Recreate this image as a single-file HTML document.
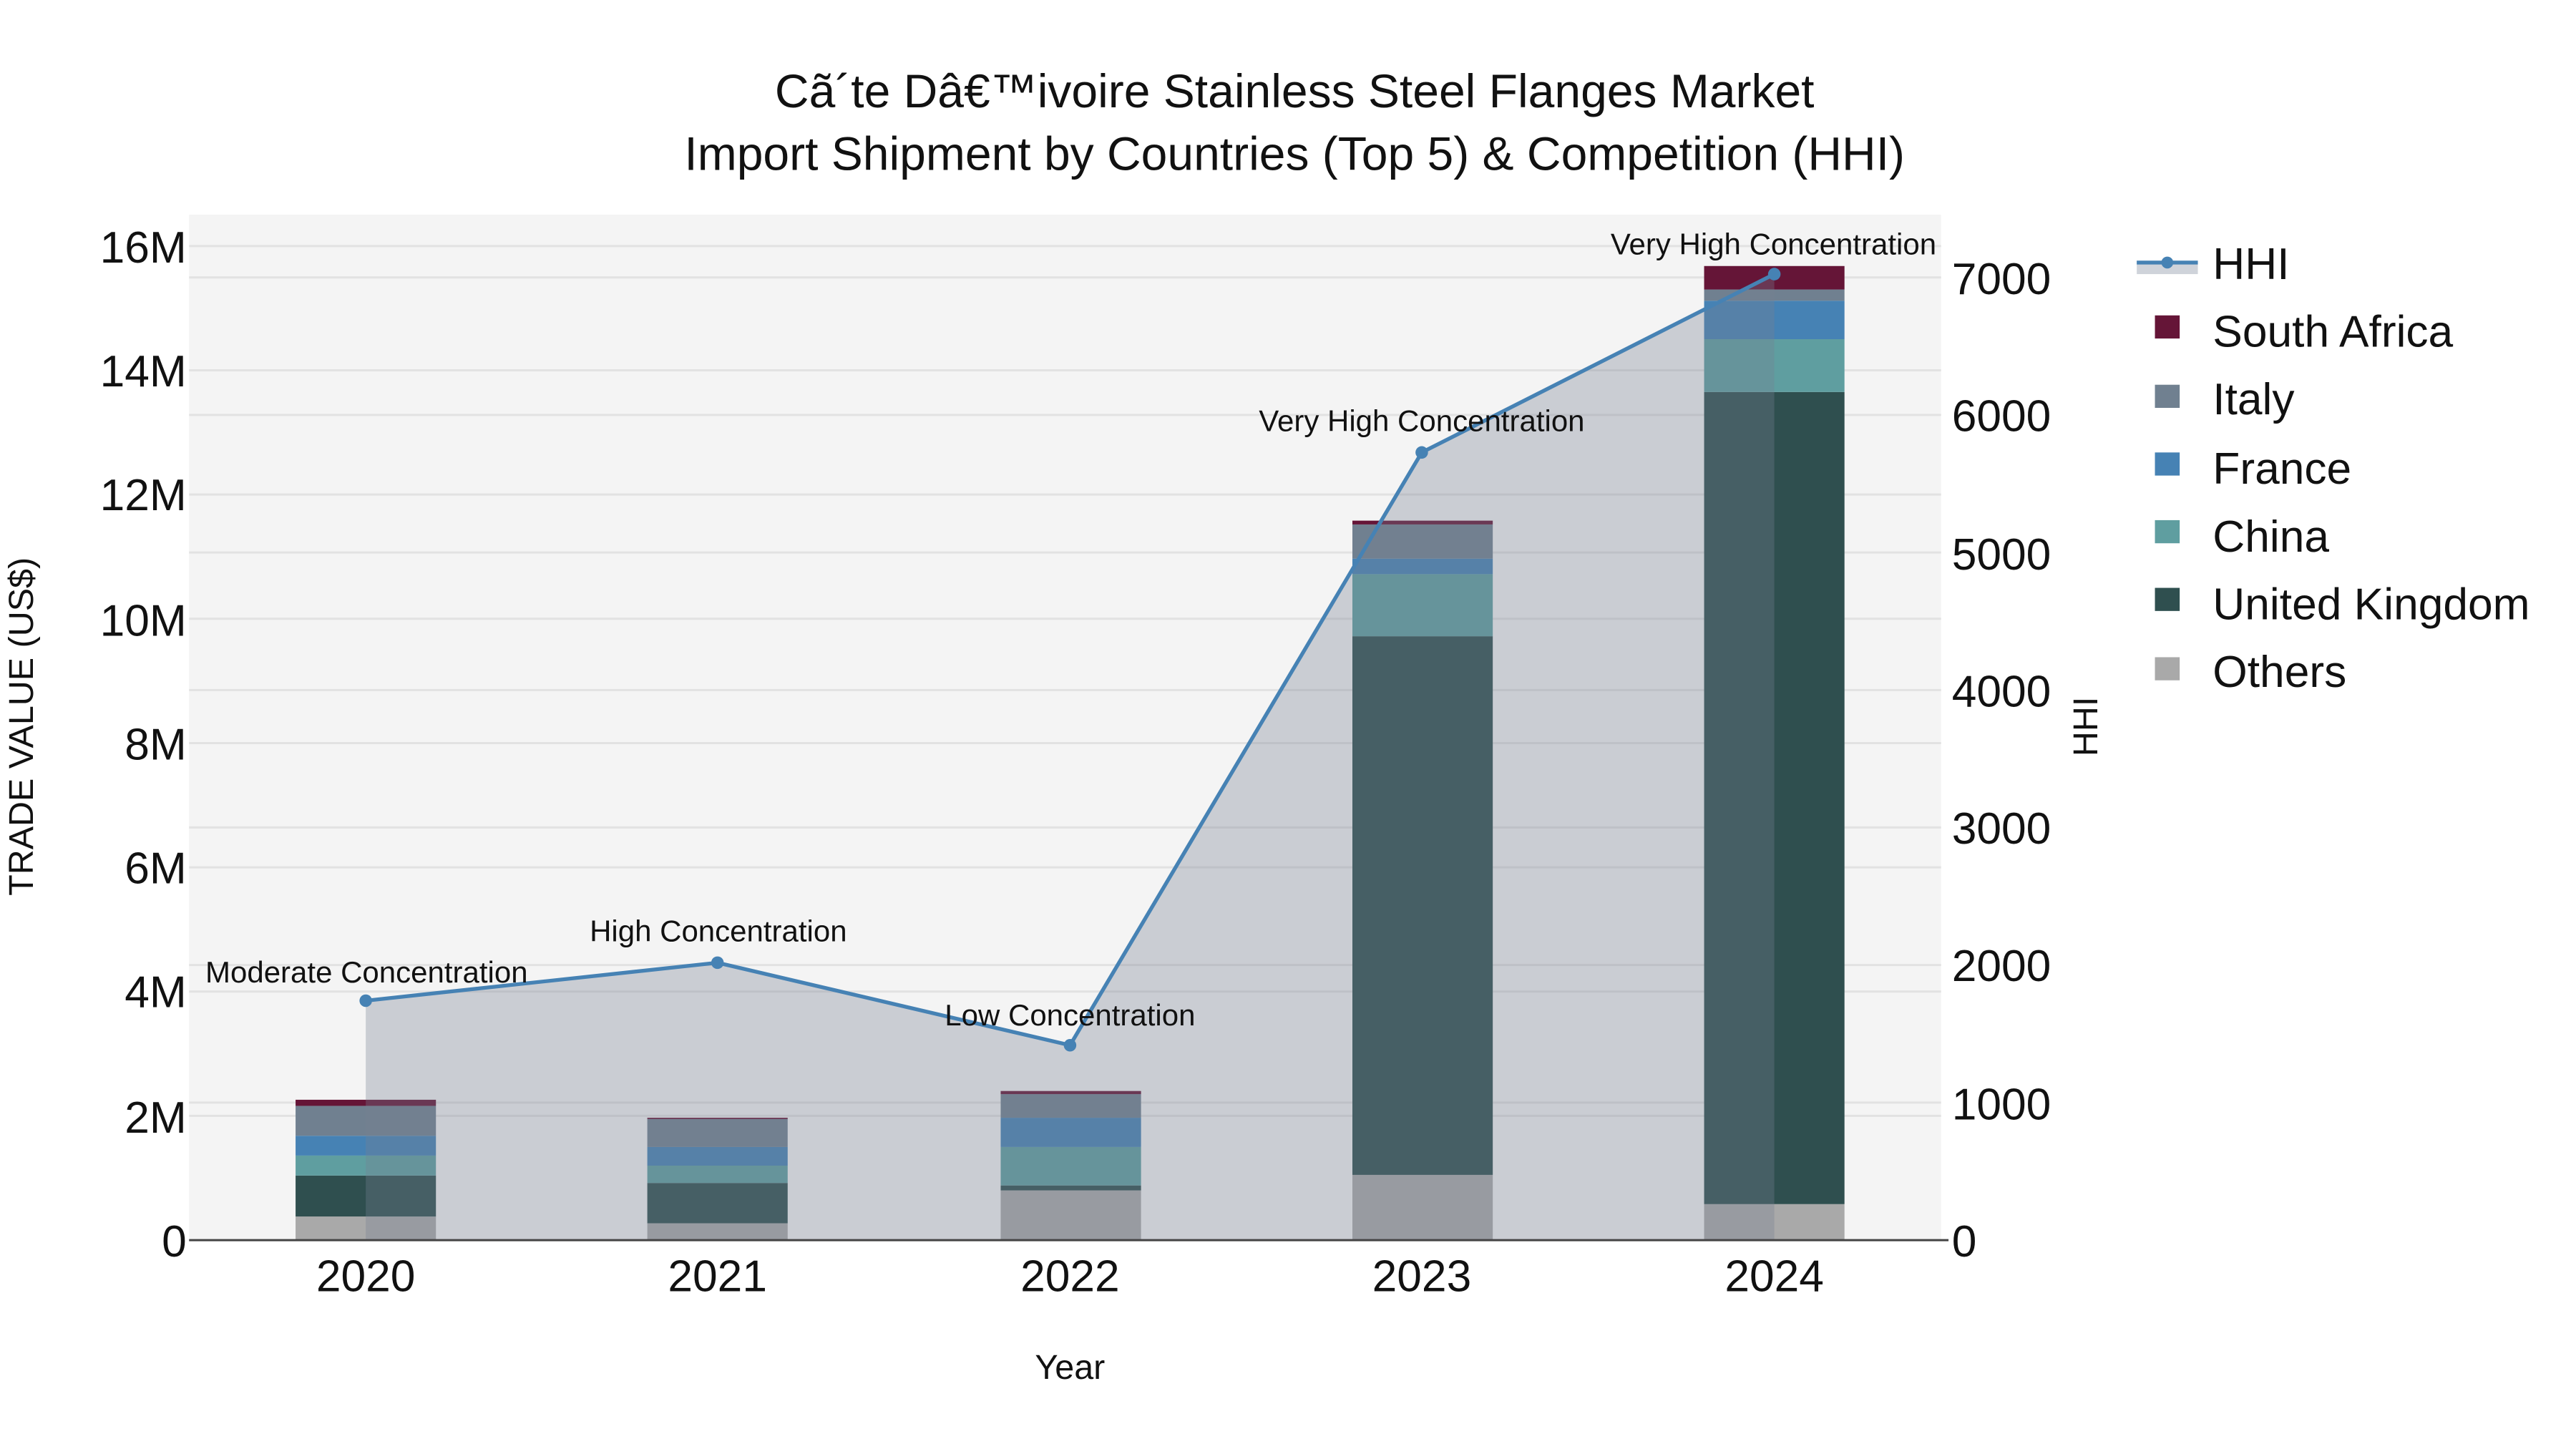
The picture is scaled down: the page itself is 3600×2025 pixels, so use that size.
<!DOCTYPE html>
<html><head><meta charset="utf-8"><style>
html,body{margin:0;padding:0;background:#fff;}
svg{display:block;}
text{font-family:"Liberation Sans",sans-serif;fill:#111;}
</style></head><body>
<svg width="3600" height="2025" viewBox="0 0 1560 877.5" xmlns="http://www.w3.org/2000/svg">
<rect x="0" y="0" width="1560" height="877.5" fill="#fff"/>
<rect x="114.5" y="130" width="1061" height="621" fill="#f4f4f4"/>
<g stroke="#e2e2e2" stroke-width="1.3">
<line x1="114.5" x2="1175.5" y1="675.75" y2="675.75"/>
<line x1="114.5" x2="1175.5" y1="600.5" y2="600.5"/>
<line x1="114.5" x2="1175.5" y1="525.25" y2="525.25"/>
<line x1="114.5" x2="1175.5" y1="450" y2="450"/>
<line x1="114.5" x2="1175.5" y1="374.75" y2="374.75"/>
<line x1="114.5" x2="1175.5" y1="299.5" y2="299.5"/>
<line x1="114.5" x2="1175.5" y1="224.25" y2="224.25"/>
<line x1="114.5" x2="1175.5" y1="149" y2="149"/>
<line x1="114.5" x2="1175.5" y1="667.7" y2="667.7"/>
<line x1="114.5" x2="1175.5" y1="584.4" y2="584.4"/>
<line x1="114.5" x2="1175.5" y1="501.1" y2="501.1"/>
<line x1="114.5" x2="1175.5" y1="417.9" y2="417.9"/>
<line x1="114.5" x2="1175.5" y1="334.6" y2="334.6"/>
<line x1="114.5" x2="1175.5" y1="251.3" y2="251.3"/>
<line x1="114.5" x2="1175.5" y1="168" y2="168"/>
</g>
<g>
<rect x="179" y="736.7" width="85" height="14.3" fill="#a9a9a9"/>
<rect x="179" y="711.9" width="85" height="24.8" fill="#2f4f4f"/>
<rect x="179" y="699.8" width="85" height="12.1" fill="#5f9ea0"/>
<rect x="179" y="687.8" width="85" height="12" fill="#4682b4"/>
<rect x="179" y="669.7" width="85" height="18.1" fill="#708090"/>
<rect x="179" y="666" width="85" height="3.7" fill="#651537"/>

<rect x="392" y="740.8" width="85" height="10.2" fill="#a9a9a9"/>
<rect x="392" y="716.4" width="85" height="24.4" fill="#2f4f4f"/>
<rect x="392" y="705.9" width="85" height="10.5" fill="#5f9ea0"/>
<rect x="392" y="694.6" width="85" height="11.3" fill="#4682b4"/>
<rect x="392" y="677.6" width="85" height="17" fill="#708090"/>
<rect x="392" y="676.9" width="85" height="0.8" fill="#651537"/>

<rect x="606" y="720.9" width="85" height="30.1" fill="#a9a9a9"/>
<rect x="606" y="717.9" width="85" height="3" fill="#2f4f4f"/>
<rect x="606" y="694.6" width="85" height="23.3" fill="#5f9ea0"/>
<rect x="606" y="676.9" width="85" height="17.7" fill="#4682b4"/>
<rect x="606" y="662.6" width="85" height="14.3" fill="#708090"/>
<rect x="606" y="660.7" width="85" height="1.9" fill="#651537"/>

<rect x="819" y="711.5" width="85" height="39.5" fill="#a9a9a9"/>
<rect x="819" y="385.3" width="85" height="326.2" fill="#2f4f4f"/>
<rect x="819" y="347.7" width="85" height="37.6" fill="#5f9ea0"/>
<rect x="819" y="338.3" width="85" height="9.4" fill="#4682b4"/>
<rect x="819" y="317.6" width="85" height="20.7" fill="#708090"/>
<rect x="819" y="315.3" width="85" height="2.3" fill="#651537"/>

<rect x="1032" y="729.2" width="85" height="21.8" fill="#a9a9a9"/>
<rect x="1032" y="237.4" width="85" height="491.8" fill="#2f4f4f"/>
<rect x="1032" y="205.4" width="85" height="32" fill="#5f9ea0"/>
<rect x="1032" y="182.1" width="85" height="23.3" fill="#4682b4"/>
<rect x="1032" y="175.3" width="85" height="6.8" fill="#708090"/>
<rect x="1032" y="161.1" width="85" height="14.2" fill="#651537"/>
</g>
<polygon points="221.5,751 221.5,606 434.5,583 648,633 861,274 1074.5,166 1074.5,751" fill="rgb(118,127,145)" fill-opacity="0.33"/>
<polyline points="221.5,606 434.5,583 648,633 861,274 1074.5,166" fill="none" stroke="#4682b4" stroke-width="2.3"/>
<g fill="#4682b4">
<circle cx="221.5" cy="606" r="3.8"/><circle cx="434.5" cy="583" r="3.8"/><circle cx="648" cy="633" r="3.8"/><circle cx="861" cy="274" r="3.8"/><circle cx="1074.5" cy="166" r="3.8"/>
</g>
<line x1="114.5" x2="1180" y1="751" y2="751" stroke="#444" stroke-width="1.3"/>
<g font-size="18.2" text-anchor="middle">
<text x="222" y="595">Moderate Concentration</text>
<text x="435" y="570">High Concentration</text>
<text x="648" y="621">Low Concentration</text>
<text x="861" y="261">Very High Concentration</text>
<text x="1074" y="154">Very High Concentration</text>
</g>
<g font-size="28.6" text-anchor="middle">
<text x="784" y="65">Cã´te Dâ€™ivoire Stainless Steel Flanges Market</text>
<text x="784" y="103">Import Shipment by Countries (Top 5) &amp; Competition (HHI)</text>
</g>
<g font-size="27" text-anchor="end">
<text x="113" y="761">0</text>
<text x="113" y="686">2M</text>
<text x="113" y="610">4M</text>
<text x="113" y="535">6M</text>
<text x="113" y="460">8M</text>
<text x="113" y="385">10M</text>
<text x="113" y="309">12M</text>
<text x="113" y="234">14M</text>
<text x="113" y="159">16M</text>
</g>
<g font-size="27" text-anchor="start">
<text x="1182" y="761">0</text>
<text x="1182" y="678">1000</text>
<text x="1182" y="594">2000</text>
<text x="1182" y="511">3000</text>
<text x="1182" y="428">4000</text>
<text x="1182" y="345">5000</text>
<text x="1182" y="261">6000</text>
<text x="1182" y="178">7000</text>
</g>
<g font-size="27" text-anchor="middle">
<text x="221.5" y="782">2020</text>
<text x="434.5" y="782">2021</text>
<text x="648" y="782">2022</text>
<text x="861" y="782">2023</text>
<text x="1074.5" y="782">2024</text>
</g>
<text x="648" y="835" font-size="21" text-anchor="middle">Year</text>
<text transform="translate(20,440) rotate(-90)" font-size="21" text-anchor="middle">TRADE VALUE (US$)</text>
<text transform="translate(1270,440) rotate(-90)" font-size="21" text-anchor="middle">HHI</text>
<rect x="1294" y="158" width="37" height="8" fill="#cfd3da"/>
<line x1="1294" x2="1331" y1="159" y2="159" stroke="#4682b4" stroke-width="2.3"/>
<circle cx="1312.5" cy="159" r="3.6" fill="#4682b4"/>
<g font-size="27">
<text x="1340" y="169">HHI</text>
<text x="1340" y="210">South Africa</text>
<text x="1340" y="251">Italy</text>
<text x="1340" y="293">France</text>
<text x="1340" y="334">China</text>
<text x="1340" y="375">United Kingdom</text>
<text x="1340" y="416">Others</text>
</g>
<rect x="1305" y="191" width="15" height="14" fill="#651537"/>
<rect x="1305" y="233" width="15" height="14" fill="#708090"/>
<rect x="1305" y="274" width="15" height="14" fill="#4682b4"/>
<rect x="1305" y="315" width="15" height="14" fill="#5f9ea0"/>
<rect x="1305" y="356" width="15" height="14" fill="#2f4f4f"/>
<rect x="1305" y="398" width="15" height="14" fill="#a9a9a9"/>
</svg>
</body></html>
